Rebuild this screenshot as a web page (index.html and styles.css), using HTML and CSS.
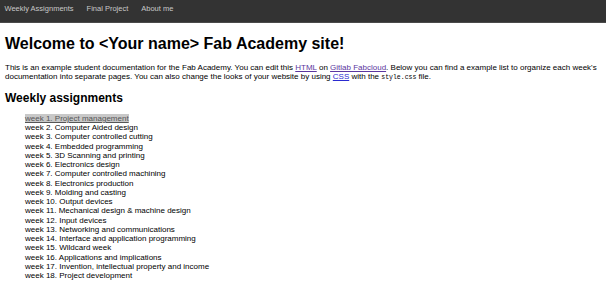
FILE: index.html
```html
<!DOCTYPE html>
<html>
<head>
<meta charset="utf-8">
<link rel="stylesheet" href="styles.css">
</head>
<body>
<nav class="navbar">
  <a class="nav-link" href="#">Weekly Assignments</a>
  <a class="nav-link" href="#">Final Project</a>
  <a class="nav-link" href="#">About me</a>
</nav>
<main class="content">
  <h1 class="title">Welcome to &lt;Your name&gt; Fab Academy site!</h1>
  <p class="intro">This is an example student documentation for the Fab Academy. You can edit this <a class="link visited" href="#">HTML</a> on <a class="link visited" href="#">Gitlab Fabcloud</a>. Below you can find a example list to organize each week's documentation into separate pages. You can also change the looks of your website by using <a class="link" href="#">CSS</a> with the <code class="code">style.css</code> file.</p>
  <h2 class="subtitle">Weekly assignments</h2>
  <ul class="weeks">
    <li><a class="week-link" href="#">week 1. Project management</a></li>
    <li>week 2. Computer Aided design</li>
    <li>week 3. Computer controlled cutting</li>
    <li>week 4. Embedded programming</li>
    <li>week 5. 3D Scanning and printing</li>
    <li>week 6. Electronics design</li>
    <li>week 7. Computer controlled machining</li>
    <li>week 8. Electronics production</li>
    <li>week 9. Molding and casting</li>
    <li>week 10. Output devices</li>
    <li>week 11. Mechanical design &amp; machine design</li>
    <li>week 12. Input devices</li>
    <li>week 13. Networking and communications</li>
    <li>week 14. Interface and application programming</li>
    <li>week 15. Wildcard week</li>
    <li>week 16. Applications and implications</li>
    <li>week 17. Invention, intellectual property and income</li>
    <li>week 18. Project development</li>
  </ul>
</main>
</body>
</html>
```
FILE: styles.css
```css
html, body {
  margin: 0;
  padding: 0;
  background: #fff;
}
body {
  font-family: "Liberation Sans", Arial, sans-serif;
  font-size: 8px;
  line-height: 9.25px;
  color: #000;
}
.navbar {
  display: flex;
  gap: 13px;
  height: 23px;
  box-sizing: border-box;
  padding: 4px 0 0 4.5px;
  background: #333;
  border-bottom: 1px solid #4a4a4a;
}
.nav-link {
  font-size: 7.5px;
  color: #c8c8c8;
  text-decoration: none;
}
.content {
  padding: 0 5px;
}
.title {
  font-size: 16px;
  line-height: 19px;
  font-weight: bold;
  margin: 11px 0 10px;
}
.intro {
  margin: 9px 0;
  line-height: 9.25px;
}
.link {
  color: #2a2ad0;
}
.link.visited {
  color: #5b36a0;
}
.code {
  font-family: "Liberation Mono", "DejaVu Sans Mono", monospace;
  font-size: 6.5px;
  line-height: 1;
}
.subtitle {
  font-size: 12px;
  line-height: 14px;
  font-weight: bold;
  margin: 9px 0 9px;
}
.weeks {
  list-style: none;
  margin: 9px 0;
  padding-left: 20px;
}
.week-link {
  color: #555;
  background: #c8c8c8;
}
```
